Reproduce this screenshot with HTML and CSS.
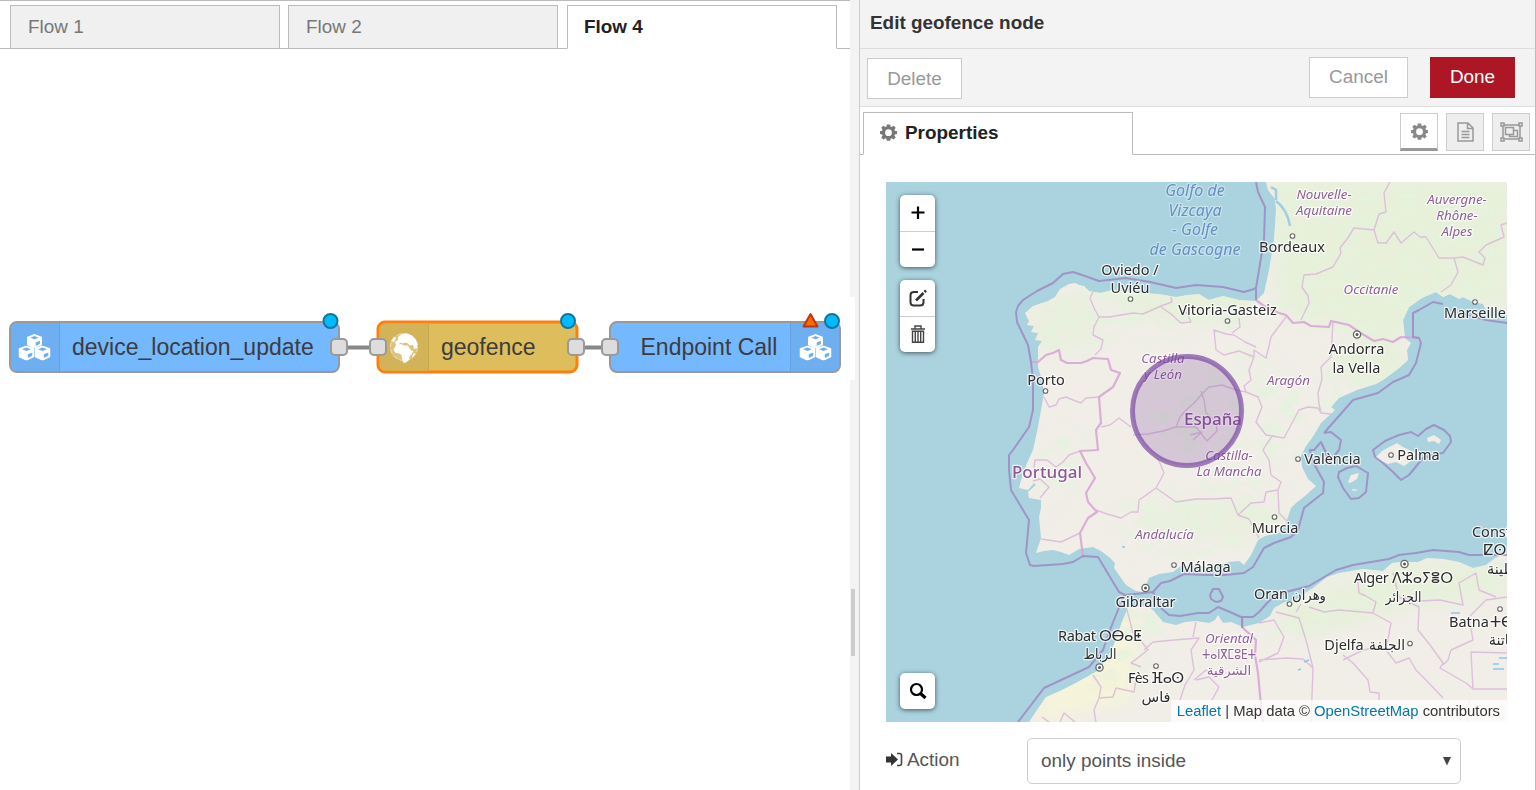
FILE: index.html
```html
<!DOCTYPE html>
<html lang="en">
<head>
<meta charset="utf-8">
<title>Edit geofence node</title>
<link rel="stylesheet" href="styles.css">
</head>
<body>
<svg class="defs" width="0" height="0">
  <defs>
    <symbol id="gear" viewBox="0 0 20 20"><path fill="currentColor" fill-rule="evenodd" d="M8 .5h4l.5 2.600 1.200.5L16 2.100 18.500 4.500l-1.500 2.300.5 1.200 2.500.5v3.400l-2.500.5-.5 1.200 1.500 2.200-2.500 2.500-2.300-1.500-1.200.5L12 19.800H8l-.5-2.500-1.200-.5-2.300 1.500-2.500-2.500L3 13.600l-.5-1.200L0 11.900V8.500L2.500 8 3 6.800 1.500 4.500 4 2.100l2.300 1.500 1.200-.5zM10 6.200a4 4 0 1 0 0 8 4 4 0 0 0 0-8z"/></symbol>
    <symbol id="cube" viewBox="0 0 16 16" preserveAspectRatio="none"><path d="M8 0 15.600 3Q16 3.300 16 4v7.500Q16 12.200 15.500 12.500L8.500 16h-1L.5 12.500Q0 12.200 0 11.500V4q0-.7.4-1z" fill="#fff"/><path d="M8 2.200 12.500 4 8 5.800 3.500 4zM9.300 9.300l4.500-1.900v3.500l-4.500 2.300z" fill="#6eaff2"/></symbol>
    <symbol id="cubes" viewBox="0 0 32 27"><use href="#cube" x="8.500" y="0" width="15" height="14.500"/><use href="#cube" x="0" y="11.500" width="16" height="15"/><use href="#cube" x="16" y="11.500" width="16" height="15"/></symbol>
  </defs>
</svg>
<div class="app">
  <main class="workspace">
    <nav class="tabs">
      <div class="tab">Flow 1</div>
      <div class="tab">Flow 2</div>
      <div class="tab tab-active">Flow 4</div>
    </nav>
    <svg class="flow" width="856" height="741" viewBox="0 49 856 741">
      <rect x="846" y="297" width="9" height="83" fill="#fff"/>
      <path d="M339 347.500H378M576 347.500H610" stroke="#888" stroke-width="4"/>
      <g stroke="#999" stroke-width="2">
        <rect x="10" y="322" width="329" height="50" rx="7" fill="#74b8ff"/>
        <rect x="610" y="322" width="230" height="50" rx="7" fill="#74b8ff"/>
      </g>
      <path d="M59 323H17a6 6 0 0 0-6 6v36a6 6 0 0 0 6 6h42zM791 323h42a6 6 0 0 1 6 6v36a6 6 0 0 1-6 6h-42z" fill="#6eaff2"/>
      <path d="M59.500 323v48M790.500 323v48" stroke="#659fdd"/>
      <rect x="378" y="322" width="199" height="50" rx="7" fill="#debd5c" stroke="#ff7f0e" stroke-width="3"/>
      <path d="M428 323.500H386a6.500 6.500 0 0 0-6.500 6.500v34a6.500 6.500 0 0 0 6.500 6.500h42z" fill="#d2b357"/>
      <path d="M428.500 324v46" stroke="#c6a84f"/>
      <use href="#cubes" x="18" y="334" width="33" height="27"/>
      <use href="#cubes" x="799" y="334" width="33" height="27"/>
      <circle cx="404" cy="347" r="14" fill="#dcc47c"/>
      <circle cx="404" cy="347" r="13.500" fill="none" stroke="#ece0b8" stroke-dasharray="5 2"/>
      <path fill="#fff" d="M398 337l4-3 5-.5 5 2 3.500 3.500 2 5-.5 4-3 1-1-4-3 .5-2-2-3-1-2 1-3-1-1 2-3 .5-1-3 3-2zM396 345l5-1 3 1.500 4 0 3 5 2.500.5-2 3.500-2 2-.5 3.500-3 2.500-2.500.5-1.500-4-.5-4-2-1.500-4-.5-2-3zM391 341l3-4 2 1-2 4zM413 354l2-1-1 3-2 2z"/>
      <g fill="#ddd" stroke="#999" stroke-width="2">
        <rect x="331" y="339" width="16" height="16" rx="4"/><rect x="370" y="339" width="16" height="16" rx="4"/>
        <rect x="568" y="339" width="16" height="16" rx="4"/><rect x="602" y="339" width="16" height="16" rx="4"/>
      </g>
      <g fill="#00bcff" stroke="#11759c" stroke-width="2">
        <circle cx="330.500" cy="321" r="7"/><circle cx="568" cy="321" r="7"/><circle cx="832" cy="321" r="7"/>
      </g>
      <path d="M810.500 314l7 12.500h-14z" fill="#ff6a00" stroke="#b8371a" stroke-width="2" stroke-linejoin="round"/>
      <g class="node-label"><text x="72" y="354.500">device_location_update</text><text x="441" y="354.500">geofence</text><text x="640.500" y="354.500">Endpoint Call</text></g>
    </svg>
  </main>
  <div class="splitter"><div class="grip"></div></div>
  <aside class="panel">
    <header class="title">Edit geofence node</header>
    <div class="toolbar">
      <button class="btn btn-delete">Delete</button>
      <button class="btn btn-cancel">Cancel</button>
      <button class="btn btn-done">Done</button>
    </div>
    <div class="subtabs">
      <div class="subtab"><svg width="17" height="17"><use href="#gear"/></svg>Properties</div>
      <div class="modes">
        <div class="mode mode-on"><svg width="17" height="17"><use href="#gear"/></svg></div>
        <div class="mode"><svg width="17" height="20" viewBox="0 0 17 20" fill="none" stroke="#999" stroke-width="1.500"><path d="M1 1h10l5 5v13H1zM10.500 1v5.500H16M4.500 9.500h8M4.500 12.500h8M4.500 15.500h8"/></svg></div>
        <div class="mode"><svg width="23" height="20" viewBox="0 0 23 20" fill="none" stroke="#999" stroke-width="1.500"><path d="M3 3h17v14H3zM5.500 5.500h8v7h-8zM13.500 8.500h4v6h-8v-2"/><path fill="#eee" d="M1 1h3v3H1zM19 1h3v3h-3zM1 16h3v3H1zM19 16h3v3h-3z"/></svg></div>
      </div>
    </div>
    <section class="form">
      <div class="map">
        <svg class="tiles" width="621" height="540" viewBox="886 182 621 540">
          <defs>
            <path id="iberia" d="M1266 182 1268 190 1275 199 1276 210 1274 240 1269 270 1264 293 1256 301 1239 300 1223 296 1209 300 1199 294 1188 295 1176 297 1158 294 1139 293 1125 291 1113 290 1100 293 1089 291 1084 286 1079 285 1075 283 1069 284 1060 289 1055 297 1048 301 1033 306 1025 313 1029 321 1027 325 1034 326 1031 332 1038 333 1035 340 1042 341 1038 347 1038 353 1038 367 1042 380 1044 393 1041 410 1038 427 1033 450 1028 461 1023 473 1019 488 1028 490 1034 483 1036 485 1028 492 1029 498 1041 500 1041 508 1039 517 1041 538 1036 553 1044 551 1053 550 1061 552 1069 555 1079 549 1093 547 1101 551 1109 557 1115 563 1114 568 1119 575 1126 585 1136 591 1143 592 1149 578 1159 574 1173 572 1181 566 1210 567 1229 562 1239 561 1244 565 1251 555 1258 540 1265 536 1279 533 1286 523 1291 508 1296 503 1305 496 1316 486 1308 479 1302 467 1301 456 1306 446 1314 435 1321 423 1335 410 1331 407 1339 398 1357 390 1376 384 1383 380 1398 369 1408 360 1407 350 1411 343 1405 338 1403 320 1409 307 1422 298 1436 292 1443 297 1450 294 1459 299 1463 297 1473 302 1483 304 1486 310 1495 308 1507 315V182z"/>
            <path id="africa" d="M1029 722 1037 710 1046 697 1060 691 1076 683 1099 670 1109 655 1116 640 1122 622 1128 608 1135 607 1146 606 1153 610 1163 622 1176 625 1185 622 1196 621 1209 623 1215 620 1218 615 1223 623 1231 622 1243 627 1259 623 1270 616 1274 608 1285 602 1296 600 1305 593 1313 588 1327 577 1339 573 1363 569 1383 571 1392 563 1399 562 1418 562 1427 558 1443 559 1459 562 1473 568 1486 565 1495 558 1507 553V722z"/>
            <clipPath id="land"><use href="#iberia"/><use href="#africa"/></clipPath>
            <filter id="soft" x="-20%" y="-20%" width="140%" height="140%"><feGaussianBlur stdDeviation="7"/></filter>
            <filter id="speckle" filterUnits="userSpaceOnUse" x="886" y="182" width="621" height="540">
              <feGaussianBlur in="SourceGraphic" stdDeviation="8" result="area"/>
              <feTurbulence type="fractalNoise" baseFrequency=".05 .08" numOctaves="4" seed="8"/>
              <feColorMatrix values="0 0 0 0 .78  0 0 0 0 .89  0 0 0 0 .72  6 0 0 0 -2.800" result="noise"/>
              <feComposite in="noise" in2="area" operator="in"/>
            </filter>
          </defs>
          <path fill="#aad3df" d="M886 182h621v540H886z"/>
          <g fill="#f1eee8"><use href="#iberia"/><use href="#africa"/>
            <path d="M1375 458l7-7 15-8 6 4 13 6-5 8-7 5-8-4-8 2zM1427 438l7-3 7 5-2 4-5-3-6 1zM1348 482l3-7 8-2-2 6-7 4zM1352 489l7 1-6 1z"/></g>
          <g clip-path="url(#land)">
            <g filter="url(#soft)" fill="#e4f0d6" opacity=".75">
              <path d="M1270 180h240v125h-80l-40 40-110-35zM1090 290h160v28h-100z"/>
              <ellipse cx="1065" cy="323" rx="35" ry="28" opacity=".7"/><ellipse cx="1214" cy="520" rx="75" ry="18" opacity=".7"/><ellipse cx="1370" cy="362" rx="38" ry="20"/><path fill="#f6f5d6" d="M1035 722l5-20 80-90h20l-10 90z"/><path d="M1270 610l130-45h105v25l-100 18-100 30z"/>
            </g>
            <g filter="url(#speckle)" fill="#fff" opacity=".8">
              <path d="M1272 182h235v125h-70l-43 43-120-38zM1040 285h210v40l-60 16-75-3-70 25z"/>
              <path d="M1110 510l60-20 80-20 35 20-5 35-60 35-90-5zM1040 430h50l-20 60-25 30zM1140 400l80-35 45-20 50 60-20 70-55-30-60 20zM1120 590h65l-35 75-65 20zM1235 620l100-55 170-5-5 40-130 10-90 35zM1330 355h75l-35 30-60 65z"/>
            </g>
            <path d="M1276 201q11 8 14 25M1271 187l5 3v10" fill="none" stroke="#a4cce0" stroke-width="2.500"/>
          </g>
          <g fill="none" stroke="#dbb7d9" stroke-width="1.400" stroke-linejoin="round" opacity=".85">
            <path d="M1093 292 1090 298 1094 308 1099 317 1094 327 1093 335 1103 340 1101 349 1095 355M1099 317 1109 317 1121 315 1133 313 1143 314 1152 310 1161 306 1172 302 1171 297M1161 307 1171 314 1181 323 1191 322 1187 313 1179 308"/>
            <path d="M1044 397 1049 407 1056 405 1059 399 1066 397 1073 400 1081 403 1086 398 1099 397M1101 427 1110 425 1119 418 1131 427M1133 435 1148 434 1163 431 1176 427 1180 417 1186 410 1194 403 1203 393 1209 387 1222 385 1236 390 1246 392 1244 386 1251 380 1249 370 1254 357M1176 427 1196 427 1207 441 1217 431 1216 421 1206 413 1204 400 1201 391M1190 435 1202 432 1193 440"/>
            <path d="M1254 357 1254 350 1266 358 1269 346 1271 337 1286 317M1254 357 1239 351 1224 355 1216 350 1214 330 1226 334 1234 335 1245 342 1256 347M1232 333 1240 327 1239 318M1246 392 1258 397 1262 407 1256 422 1266 435 1284 438 1299 410 1308 407 1318 408 1321 413M1333 322 1331 357 1321 367 1322 379 1318 393 1319 404 1321 413 1331 414M1273 435 1266 445 1263 450 1269 460 1271 475 1281 482 1278 490 1266 492 1264 502 1251 503 1238 515 1249 519 1259 538M1238 515 1231 498 1212 499 1196 499 1176 502 1156 488 1139 500 1138 512 1131 512 1121 518 1107 514 1096 510M1156 488 1164 473 1160 463 1157 458M1278 490 1279 513 1289 523"/>
            <path d="M1301 320 1309 303 1308 296 1302 287 1304 275 1316 274 1333 267 1341 253 1340 248 1347 239 1354 228 1374 230 1379 214 1386 212 1384 193 1390 182M1374 230 1378 243 1386 243 1394 232 1401 243 1414 232 1420 237 1426 237 1439 258 1454 258 1463 257 1483 265 1485 258 1479 252 1486 245 1504 237 1501 225 1507 223M1454 258 1458 272 1451 285 1441 292"/>
            <path d="M1041 539 1061 542 1080 533M1033 475 1035 460 1047 460 1056 467 1063 462 1069 455 1080 451M1033 481 1040 479 1049 487 1040 498"/>
            <path d="M1127 610 1133 633 1141 641 1148 650 1131 663 1141 667M1144 650 1153 642 1174 640 1199 638 1191 650 1194 670 1185 685 1180 700M1093 675 1101 687 1099 698 1094 710 1096 722M1099 698 1113 697 1116 688 1134 692 1136 680M1196 622 1193 637M1194 680 1206 670 1215 678"/>
            <path d="M1259 623 1274 620 1284 637 1278 653 1259 662M1259 660 1286 658 1303 659 1313 668 1311 722M1276 612 1299 618 1306 640 1313 668M1296 612 1301 604M1309 607 1324 612 1339 610 1373 613 1376 602 1366 596 1359 593 1357 572M1373 613 1391 623 1386 650 1396 663 1409 658 1416 670 1426 680 1443 698M1343 660 1363 650 1379 647M1343 655 1353 663 1368 680 1370 692 1379 693 1379 700M1393 573 1399 597 1419 607 1418 630 1430 645 1443 663 1440 668 1466 683 1473 689 1507 689M1443 665 1448 660 1451 650 1473 640 1469 617 1486 600 1507 597M1473 689 1471 652 1507 653M1403 598 1420 601 1440 600 1463 605 1459 583 1476 573 1479 590 1496 597M1196 680 1209 677 1219 687 1212 700"/>
            <path d="M1042 717l11 8M1060 722l4-9 11 9M1470 700l-5 10 4 12"/>
          </g>
          <g fill="none" stroke="#d7a2d4" stroke-width="2.200" stroke-linejoin="round" opacity=".85">
            <path d="M1031 362 1038 362 1046 355 1053 353 1059 350 1061 360 1067 363 1081 363 1087 361 1093 358 1108 359 1111 370 1120 373 1113 387 1099 397 1101 423 1096 430 1098 450 1080 451 1086 463 1095 478 1086 493 1088 502 1097 512 1088 518 1080 533 1083 556"/>
            <path d="M1256 300 1264 306 1279 313 1286 315 1293 323 1304 322 1311 326 1329 327 1331 321 1349 325 1359 332 1374 341 1383 339 1393 342 1401 337 1419 338M1242 617 1243 628 1256 640 1255 655 1258 673 1260 695 1263 722"/>
          </g>
          <g fill="none" stroke="#9c83c0" stroke-width="2" stroke-linejoin="round" opacity=".78">
            <path d="M1256 182 1258 192 1265 207 1264 240 1256 288 1254 289 1244 292 1223 287 1196 285 1176 288 1150 282 1126 278 1099 281 1085 276 1073 272 1063 274 1053 283 1037 291 1023 300 1018 306 1016 312 1017 322 1028 345 1031 362 1033 380 1033 410 1029 427 1013 450 1009 455 1009 470 1011 490 1029 520 1026 553 1030 565 1034 566 1063 564 1073 562 1083 556 1098 557 1119 592 1125 595 1153 592 1161 583 1170 581 1184 574 1206 575 1225 575 1244 573 1253 567 1264 548 1274 543 1291 537 1298 530 1304 508 1323 493 1324 482 1313 462 1310 450 1314 450 1321 442 1328 458M1256 288 1256 300M1324 433 1353 400 1378 393 1393 382 1409 375 1416 363 1421 343 1419 338 1413 337 1413 313 1419 310 1433 302 1443 304M1465 314 1486 320 1507 323M1324 433 1331 432 1341 440 1339 450 1330 461 1321 442"/>
            <path d="M1018 722 1044 688 1089 667 1103 650 1110 630 1118 610 1124 595M1153 592 1161 608 1169 615 1180 616 1198 613 1209 613 1218 607 1230 612 1241 617 1253 617 1259 612 1268 602 1274 597 1286 592 1309 586 1336 570 1353 565 1389 559 1399 555 1416 553 1433 550 1459 552 1469 555 1507 555M1242 617v11"/>
            <path d="M1338 477 1339 472 1347 468 1356 466 1368 473 1366 492 1359 498 1351 499 1343 488zM1373 450 1375 457 1383 463 1393 472 1401 480 1409 475 1423 458 1436 454 1443 453 1451 442 1450 436 1444 430 1434 425 1426 429 1418 436 1411 432 1399 435 1385 441zM1213 589 1219 589 1223 597 1221 601 1216 602 1211 599 1210 595z"/>
          </g>
          <g class="area-label">
            <text x="1195" y="196" class="sea">Golfo de</text><text x="1195" y="215.500" class="sea">Vizcaya</text><text x="1195" y="235" class="sea">- Golfe</text><text x="1195" y="254.500" class="sea">de Gascogne</text>
            <text x="1324" y="199">Nouvelle-</text><text x="1324" y="215">Aquitaine</text><text x="1457" y="204">Auvergne-</text><text x="1457" y="220">Rhône-</text><text x="1457" y="236">Alpes</text>
            <text x="1371" y="294">Occitanie</text><text x="1163" y="363">Castilla</text><text x="1163" y="379">y León</text><text x="1288.500" y="384.500">Aragón</text><text x="1229" y="460">Castilla-</text><text x="1229" y="476">La Mancha</text><text x="1164.500" y="539">Andalucía</text><text x="1229" y="643">Oriental</text><text x="1229" y="659" class="upright" textLength="54" lengthAdjust="spacingAndGlyphs">ⵜⴰⵏⴳⵎⵓⴹⵜ</text><text x="1229" y="675" class="upright">الشرقية</text>
          </g>
          <g class="country-label"><text x="1213" y="425" textLength="58">España</text><text x="1047" y="478" textLength="70">Portugal</text></g>
          <g class="city-label">
            <text x="1130" y="275">Oviedo /</text><text x="1130" y="293">Uviéu</text><text x="1227.500" y="315">Vitoria-Gasteiz</text><text x="1292" y="252">Bordeaux</text><text x="1356.500" y="354">Andorra</text><text x="1356.500" y="372.500">la Vella</text><text x="1475" y="318">Marseille</text><text x="1046" y="385">Porto</text><text x="1332.500" y="464">València</text><text x="1418.500" y="460">Palma</text><text x="1275" y="532.500">Murcia</text><text x="1205.500" y="571.500">Málaga</text><text x="1145.500" y="607">Gibraltar</text>
            <text x="1100" y="640.500" textLength="84">Rabat ⵔⴱⴰⵟ</text><text x="1100" y="659" textLength="33" lengthAdjust="spacingAndGlyphs">الرباط</text><text x="1156" y="683" textLength="56">Fès ⴼⴰⵙ</text><text x="1156" y="702">فاس</text><text x="1271" y="599">Oran</text><text x="1309" y="600" textLength="34" lengthAdjust="spacingAndGlyphs">وهران</text><text x="1403.500" y="583" textLength="99">Alger ⴷⵣⴰⵢⴻⵔ</text><text x="1403.500" y="602" textLength="36" lengthAdjust="spacingAndGlyphs">الجزائر</text><text x="1344" y="650">Djelfa</text><text x="1387" y="650" textLength="36" lengthAdjust="spacingAndGlyphs">الجلفة</text><text x="1469" y="627">Batna</text><text x="1502" y="627">ⵜⴱ</text><text x="1501" y="645">باتنة</text><text x="1491.500" y="537">Const</text><text x="1495" y="555">ⵇⵙ</text><text x="1501" y="574">طينة</text>
          </g>
          <g fill="#fff" stroke="#666" stroke-width="1.100">
            <circle cx="1130.500" cy="299" r="2.300"/><circle cx="1227.500" cy="321" r="2.300"/><circle cx="1292.500" cy="236" r="2.300"/><circle cx="1475" cy="302" r="2.300"/><circle cx="1045.500" cy="391" r="2.300"/><circle cx="1298" cy="459" r="2.300"/><circle cx="1391" cy="455" r="2.300"/><circle cx="1274.500" cy="517" r="2.300"/><circle cx="1174" cy="565" r="2.300"/><circle cx="1156" cy="666" r="2.300"/><circle cx="1289.500" cy="604" r="2.300"/><circle cx="1410" cy="643.500" r="2.300"/><circle cx="1500" cy="609" r="2.300"/>
            <g stroke-width="1.300"><circle cx="1357" cy="334.500" r="3.600"/><circle cx="1145.500" cy="588" r="3.600"/><circle cx="1099.500" cy="667.500" r="3.600"/><circle cx="1404.500" cy="564" r="3.600"/></g>
            <g fill="#555" stroke="none"><circle cx="1357" cy="334.500" r="1.500"/><circle cx="1145.500" cy="588" r="1.500"/><circle cx="1099.500" cy="667.500" r="1.500"/><circle cx="1404.500" cy="564" r="1.500"/></g>
          </g>
          <circle cx="1187" cy="411" r="54.500" fill="#6a2c91" fill-opacity=".2" stroke="#7a4aa3" stroke-opacity=".7" stroke-width="5"/>
          <path d="M1304 662l5-2M1298 670l3-1M1451 613h9M1499 658h8M1493 664l6 0M1493 669h11M1122 547h3" stroke="#8dc7ea" stroke-width="1.500"/>
        </svg>
        <div class="controls">
          <div class="bar">
            <div class="ctl"><svg width="14" height="14"><path d="M7 .5v12.500M.5 6.500h13" stroke="#000" stroke-width="2.200"/></svg></div>
            <div class="ctl"><svg width="14" height="14"><path d="M1 6.500h12" stroke="#000" stroke-width="2.200"/></svg></div>
          </div>
          <div class="bar">
            <div class="ctl"><svg width="18" height="18" viewBox="0 0 18 18" fill="none" stroke="#333" stroke-width="2"><path d="M9 3H5Q1.500 3 1.500 6v7q0 3.500 3.500 3.500h6q3.500 0 3.500-3.500V10"/><path d="M7 11.500l7.500-7.500M15.500 3l1.500-1.500" stroke-width="2.600"/></svg></div>
            <div class="ctl"><svg width="16" height="20" viewBox="0 0 16 20" fill="none" stroke="#444" stroke-width="1.400"><path d="M1 4h14M5 3.500V1h6v2.500M2.500 6.200h11v11h-11zM5.300 6v11.500M8 6v11.500M10.700 6v11.500"/></svg></div>
          </div>
          <div class="bar bar-search"><div class="ctl"><svg width="18" height="18" fill="none" stroke="#000"><circle cx="7.500" cy="7.500" r="5.500" stroke-width="2.200"/><path d="M11.500 11.500l5 4.500" stroke-width="3.200"/></svg></div></div>
        </div>
        <div class="credit"><a>Leaflet</a> | Map data © <a>OpenStreetMap</a> contributors</div>
      </div>
      <div class="row">
        <label class="label"><svg width="17" height="15" viewBox="0 0 17 15"><path d="M0 4.500h5V1l7 6.500L5 14v-3.500H0z" fill="#333"/><path d="M11 1.500h2.500q2 0 2 2v8q0 2-2 2H11" fill="none" stroke="#444" stroke-width="1.600"/></svg>Action</label>
        <div class="select"><span>only points inside</span><svg width="8" height="9"><path d="M0 0h8L4 8.500z" fill="#444"/></svg></div>
      </div>
    </section>
  </aside>
</div>
</body>
</html>
```
FILE: styles.css
```css
* { box-sizing: border-box; }
body { margin: 0; overflow: hidden; background: #fff; color: #555; font: 18.9px/24px "Liberation Sans", Arial, sans-serif; }
.defs { position: absolute; }
.app { display: flex; width: 1536px; height: 790px; }

.workspace { width: 850px; border-top: 1px solid #bbb; position: relative; z-index: 1; }
.tabs { display: flex; gap: 8px; height: 48px; padding: 4px 0 0 10px; box-shadow: inset 0 -1px #bbb; }
.tab { width: 270px; padding: 9px 17px; border: 1px solid #bbb; background: #f0f0f0; color: #777; }
.tab-active { margin-left: 1px; background: #fff; border-bottom-color: #fff; color: #222; font-weight: bold; padding-left: 16px; }
.flow { display: block; }
.node-label { font-size: 23px; fill: #3c3c3c; }

.splitter { width: 9px; padding: 589px 0 0 1px; background: #f3f3f3; }
.grip { width: 4px; height: 67px; background: #ccc; }

.panel { width: 677px; border-left: 1px solid #ccc; border-right: 1px solid #bbb; }
.title { height: 49px; padding: 11px 10px; background: #f3f3f3; border-bottom: 1px solid #ddd; color: #333; font-weight: bold; }
.toolbar { display: flex; height: 58px; padding: 8px 20px 0 7px; background: #f3f3f3; border-bottom: 1px solid #ddd; }
.btn { height: 41px; padding: 0; border: 1px solid #ccc; background: #fff; color: #999; font: inherit; }
.btn-delete { width: 95px; margin-top: 1px; }
.btn-cancel { width: 99px; margin-left: auto; padding-bottom: 2px; }
.btn-done { width: 85px; margin-left: 22px; padding-bottom: 2px; background: #ad1625; border-color: #ad1625; color: #fff; }
.subtabs { display: flex; justify-content: space-between; height: 48px; padding: 5px 5px 0 3px; box-shadow: inset 0 -1px #bbb; }
.subtab { display: flex; gap: 8px; width: 270px; padding: 8px 0 0 16px; border: 1px solid #bbb; border-bottom-color: #fff; background: #fff; color: #222; font-weight: bold; }
.subtab svg { margin-top: 3px; color: #777; }
.modes { display: flex; gap: 8px; padding-top: 1px; }
.mode { display: flex; align-items: center; justify-content: center; width: 38px; height: 38px; border: 1px solid #ccc; background: #eee; color: #888; }
.mode-on { background: #fff; border-bottom: 3px solid #999; }

.form { padding: 27px 0 0 26px; }
.map { position: relative; width: 621px; height: 540px; overflow: hidden; }
.tiles { position: absolute; inset: 0; }
.controls { position: relative; display: flex; flex-direction: column; gap: 13px; height: 540px; padding: 13px 14px; }
.bar { width: 35px; border-radius: 5px; background: #fff; box-shadow: 0 1px 5px rgba(0,0,0,.6); }
.bar-search { margin-top: auto; }
.ctl { display: flex; align-items: center; justify-content: center; height: 36px; }
.ctl + .ctl { border-top: 1px solid #ccc; }
.credit { position: absolute; right: 0; bottom: 0; height: 22px; padding: 0 7px 0 6px; background: rgba(255,255,255,.75); color: #333; font-size: 14.8px; line-height: 22px; white-space: nowrap; }
.credit a { color: #0078a8; }

.area-label, .country-label, .city-label { font-family: "Noto Sans", "DejaVu Sans", sans-serif; text-anchor: middle; paint-order: stroke; stroke: rgba(255,255,255,.75); stroke-width: 2.5px; stroke-linejoin: round; }
.area-label { font-size: 13.3px; font-style: italic; fill: #8f5f96; }
.area-label .sea { font-size: 16px; fill: #6490c4; stroke: rgba(255,255,255,.35); }
.area-label .upright { font-style: normal; }
.country-label { font-size: 17px; font-weight: 500; fill: #8d5794; }
.city-label { font-size: 14.5px; fill: #2c2c2c; }

.row { display: flex; padding-top: 16px; }
.label { display: flex; gap: 4px; width: 141px; padding-top: 10px; }
.label svg { margin-top: 4px; }
.select { display: flex; align-items: center; justify-content: space-between; width: 434px; height: 46px; padding: 0 9px 0 13px; border: 1px solid #ccc; border-radius: 5px; }
```
